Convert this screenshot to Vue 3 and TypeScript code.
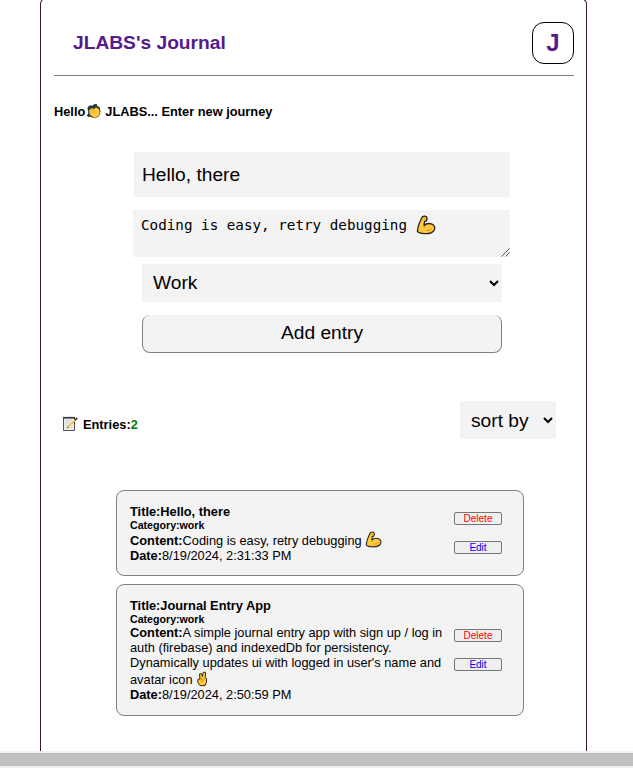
<script setup lang="ts">
import { ref } from 'vue'

interface Entry {
  id: number
  title: string
  category: string
  content: string
  emoji: 'arm' | 'victory'
  date: string
}

const title = ref('Hello, there')
const category = ref('work')
const sort = ref('')

const entries: Entry[] = [
  {
    id: 1,
    title: 'Hello, there',
    category: 'work',
    content: 'Coding is easy, retry debugging',
    emoji: 'arm',
    date: '8/19/2024, 2:31:33 PM',
  },
  {
    id: 2,
    title: 'Journal Entry App',
    category: 'work',
    content:
      "A simple journal entry app with sign up / log in auth (firebase) and indexedDb for persistency. Dynamically updates ui with logged in user's name and avatar icon",
    emoji: 'victory',
    date: '8/19/2024, 2:50:59 PM',
  },
]
</script>

<template>
  <div class="page">
    <svg class="defs" width="0" height="0" aria-hidden="true">
      <symbol id="arm" viewBox="0 0 20 20">
        <path d="M5.6 3.2C6 1.6 7 1.2 8.4 1.2 10 1.2 11 2.2 11 3.6 11 5.4 10.2 6.6 8.6 6.5L8 10.6C10 8.6 13.3 8.1 16 9.1 18.6 10.2 19.4 12.9 18.2 15.1 16.4 18 12.3 18.9 8.4 18.6 5.4 18.4 2.4 17.7 1.4 16.3 1.7 12 3.4 7.4 5.6 3.2Z" fill="#ffc83d" stroke="#2b241c" stroke-width="1.3" stroke-linejoin="round" />
        <path d="M7.9 3.7 9.2 4.1M7.6 10.8 8.6 12.4M10.4 15.4C12.4 15.9 14.2 15.2 15.4 13.8" fill="none" stroke="#d68a10" stroke-width=".9" stroke-linecap="round" />
      </symbol>
    </svg>

    <main class="journal">
      <header class="header">
        <h1>JLABS's Journal</h1>
        <div class="avatar">J</div>
      </header>

      <p class="greeting">
        <span>Hello</span>
        <svg class="clap" viewBox="0 0 16 16">
          <path d="M1.4 4.8 3.4 2.6 6.8 2.4 8.4.9 11 1.2 11.2 3 13.8 4.2 14.4 8 12.4 13.4 6.4 14.6 3.4 13.4 2.4 14.2.8 12.6 2.4 10.6Z" fill="#26383b" />
          <path d="M2.8 7.8 4.2 5.8 6 4.9 8.2 5.8 10 3.9 11.4 5 13.6 6.2 14 10.2 12.6 13.3 9.4 14.8 6.2 13.9 3.4 11Z" fill="#ffc83d" stroke="#4a3514" stroke-width=".6" />
          <path d="M4.6 7.2 7.2 9.8M6.3 6.2 8.7 8.7" stroke="#d9921c" stroke-width=".8" />
        </svg>
        <span>JLABS... Enter new journey</span>
      </p>

      <form class="form" @submit.prevent>
        <input v-model="title" class="title-input" type="text" />
        <div class="content-input" role="textbox" contenteditable="true">
          <span>Coding is easy, retry debugging</span>
          <svg class="arm-large"><use href="#arm" /></svg>
          <svg class="grip" viewBox="0 0 9 9"><path d="M.5 8.5 8.5.5M4.5 8.5 8.5 4.5" /></svg>
        </div>
        <select v-model="category" class="category-select">
          <option value="work">Work</option>
        </select>
        <button class="add" type="submit">Add entry</button>
      </form>

      <section class="toolbar">
        <div class="count">
          <svg class="memo" viewBox="0 0 16 16">
            <path d="M1.5 2H12.5V14.5H1.5Z" fill="#f0eff0" stroke="#55504f" stroke-width="1" />
            <path d="M1 1.6H13" stroke="#3b3939" stroke-width="1.4" />
            <path d="M3 4.5H10M3 6.8H8M3 9.2H7M3 11.7H10" stroke="#d3d0d4" stroke-width="1" />
            <path d="M5.9 11.2 13 4.2" stroke="#f0c04a" stroke-width="1.7" />
            <path d="M5.3 11.9 6.2 11" stroke="#6b5031" stroke-width="1.2" />
            <path d="M13 4.2 15.2 2" stroke="#493f40" stroke-width="1.9" />
          </svg>
          <span>Entries:<b class="total">{{ entries.length }}</b></span>
        </div>
        <select v-model="sort" class="sort-select">
          <option value="">sort by</option>
        </select>
      </section>

      <section class="entries">
        <article v-for="entry in entries" :key="entry.id" class="card">
          <div class="details">
            <h3>Title:{{ entry.title }}</h3>
            <h4>Category:{{ entry.category }}</h4>
            <p>
              <b>Content:</b>{{ entry.content }}&nbsp;<svg v-if="entry.emoji === 'arm'" class="emoji"><use href="#arm" /></svg><svg v-else class="emoji victory" viewBox="0 0 12 17">
                <path d="M3.9 9 3.5 4 5.2 3.4 6.4 6.6 7.3 2.2 9.5 2.2 9.4 7.7 10.7 9 10.4 12.5 9 15.6H4L1.7 12.3 1.9 9.4Z" fill="#ffc83d" stroke="#35291a" stroke-width="1" stroke-linejoin="round" />
                <path d="M3.9 9.2 5.8 8.8 7 10.5 4.9 11.8M8.4 8.2 8 10" fill="none" stroke="#c47c16" stroke-width=".8" />
              </svg>
            </p>
            <p><b>Date:</b>{{ entry.date }}</p>
          </div>
          <div class="actions">
            <button class="delete" type="button">Delete</button>
            <button class="edit" type="button">Edit</button>
          </div>
        </article>
      </section>
    </main>
    <div class="scrollbar"></div>
  </div>
</template>

<style>
body {
  margin: 0;
  overflow: hidden;
  background: #fff;
}
</style>

<style scoped>
* {
  box-sizing: border-box;
}

.page {
  display: flex;
  flex-direction: column;
  width: 633px;
  height: 768px;
  overflow: hidden;
  font-family: "Liberation Sans", Arial, sans-serif;
  font-size: 12.8px;
  color: #000;
}

.defs {
  position: absolute;
}

h1, h3, h4, p {
  margin: 0;
}

.journal {
  width: 547px;
  height: 753px;
  margin: -2px 0 0 40px;
  padding: 12px 12px 0 13px;
  border: 1px solid #3b1b1b;
  border-bottom: 0;
  border-radius: 6px 6px 0 0;
  flex: none;
}

.header {
  display: flex;
  align-items: center;
  justify-content: space-between;
  width: 520px;
  height: 65px;
  padding-left: 19px;
  border-bottom: 1px solid gray;
}

.header h1 {
  font-size: 19.2px;
  line-height: 22px;
  color: #551a8b;
}

.avatar {
  display: flex;
  align-items: center;
  justify-content: center;
  width: 42px;
  height: 42px;
  border: 1px solid #000;
  border-radius: 12px;
  font-size: 24px;
  font-weight: bold;
  color: #551a8b;
}

.greeting {
  display: flex;
  align-items: center;
  height: 16px;
  margin-top: 27px;
  font-weight: bold;
}

.clap {
  width: 16px;
  height: 16px;
  margin: 0 3px 0 1px;
}

.form {
  display: flex;
  flex-direction: column;
  align-items: center;
  width: 376px;
  margin: 33px 0 0 80px;
}

input, select, .add {
  margin: 0;
  font-family: "Liberation Sans", Arial, sans-serif;
  font-size: 19.2px;
  color: #000;
  background: #f3f3f3;
}

.title-input {
  width: 100%;
  height: 45px;
  padding: 0 8px;
  border: 0;
  outline: 0;
}

.content-input {
  position: relative;
  display: flex;
  align-items: flex-start;
  width: 377px;
  height: 47px;
  margin: 13px 0 7px -1px;
  padding: 5px 8px;
  background: #f3f3f3;
  font: 14.25px/21px "DejaVu Sans Mono", monospace;
  white-space: nowrap;
}

.arm-large {
  width: 20px;
  height: 20px;
  margin-left: 9px;
}

.grip {
  position: absolute;
  right: 0;
  bottom: 0;
  width: 9px;
  height: 9px;
  fill: none;
  stroke: #555;
  stroke-width: 1;
}

select {
  border: 0;
  border-radius: 0;
}

.category-select {
  width: 360px;
  height: 38px;
  padding: 0 0 2px 7px;
}

.add {
  width: 360px;
  height: 38px;
  margin-top: 13px;
  padding: 0 0 1px;
  border: 1px solid gray;
  border-top: 0;
  border-radius: 8px;
}

.toolbar {
  display: flex;
  align-items: center;
  justify-content: space-between;
  height: 38px;
  margin: 48px 18px 0 8px;
}

.count {
  display: flex;
  align-items: center;
  gap: 5px;
  padding-top: 8px;
  font-weight: bold;
}

.memo {
  width: 16px;
  height: 16px;
}

.total {
  color: green;
}

.sort-select {
  width: 96px;
  height: 38px;
  padding: 0 0 0 7px;
}

.entries {
  display: flex;
  flex-direction: column;
  gap: 8px;
  width: 408px;
  margin: 51px 0 0 62px;
}

.card {
  display: flex;
  align-items: center;
  justify-content: space-between;
  padding: 13px 21px 12px 13px;
  border: 1px solid gray;
  border-radius: 8px;
  background: #f3f3f3;
}

.card:last-child {
  padding-bottom: 13px;
}

.details {
  width: 316px;
  line-height: 15px;
}

.details h3 {
  font-size: 12.8px;
}

.details h4 {
  font-size: 10.64px;
  line-height: 12px;
}

.emoji {
  width: 17px;
  height: 17px;
  vertical-align: -3px;
}

.victory {
  width: 12px;
}

.actions {
  display: flex;
  flex-direction: column;
  gap: 16px;
  margin-bottom: 1px;
}

.actions button {
  display: flex;
  align-items: center;
  justify-content: center;
  width: 48px;
  height: 13px;
  margin: 0;
  padding: 0;
  border: 1px solid #767676;
  border-radius: 2px;
  background: #efefef;
  font: 10px/11px "Liberation Sans", Arial, sans-serif;
}

.actions .delete {
  color: red;
}

.actions .edit {
  color: blue;
}

.scrollbar {
  flex: none;
  height: 17px;
  border: solid #f1f1f1;
  border-width: 2px 0;
  background: #c1c1c1;
}
</style>
